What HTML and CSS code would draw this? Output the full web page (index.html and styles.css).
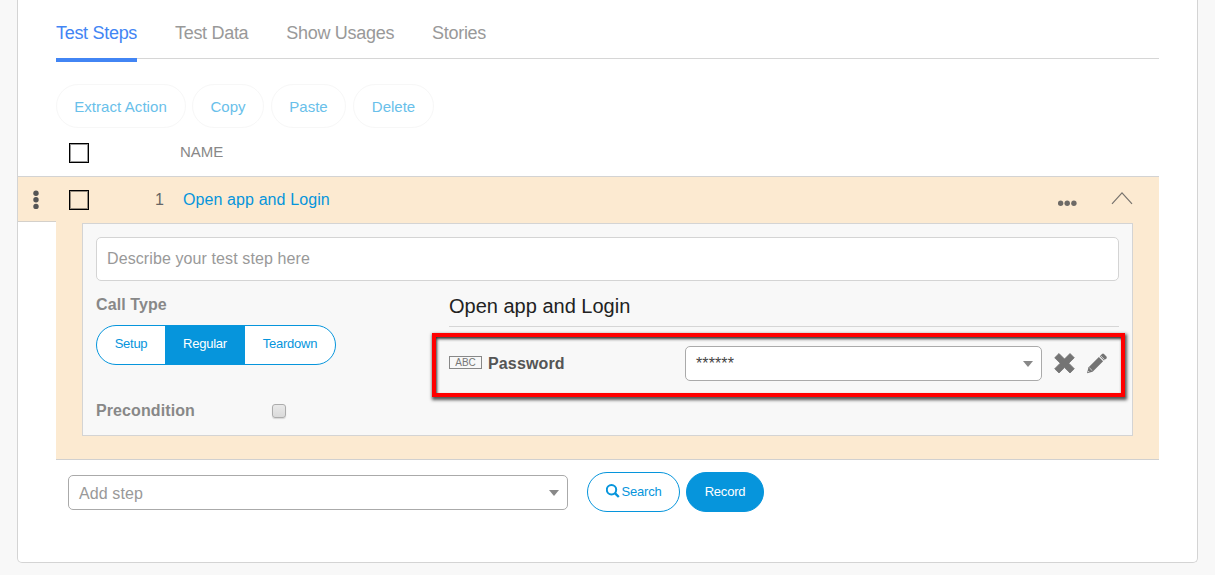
FILE: index.html
```html
<!DOCTYPE html>
<html lang="en">
<head>
<meta charset="utf-8">
<title>Test Steps</title>
<link rel="stylesheet" href="styles.css">
</head>
<body>
<main class="card">
  <nav class="tabs">
    <a class="tab tab-active">Test Steps</a>
    <a class="tab">Test Data</a>
    <a class="tab">Show Usages</a>
    <a class="tab">Stories</a>
  </nav>
  <div class="actions">
    <button class="action extract">Extract Action</button>
    <button class="action copy">Copy</button>
    <button class="action paste">Paste</button>
    <button class="action delete">Delete</button>
  </div>
  <div class="list-head">
    <span class="box"></span>
    <span class="col-name">NAME</span>
  </div>
  <section class="step">
    <div class="handle">
      <svg width="6" height="20" viewBox="0 0 6 20" fill="#555"><circle cx="3" cy="3.2" r="2.7"/><circle cx="3" cy="9.8" r="2.7"/><circle cx="3" cy="16.4" r="2.7"/></svg>
    </div>
    <div class="step-main">
      <header class="step-head">
        <span class="box"></span>
        <span class="num">1</span>
        <a class="step-link">Open app and Login</a>
        <svg class="more" width="20" height="6" viewBox="0 0 20 6" fill="#6d6a66"><circle cx="2.6" cy="3.2" r="2.7"/><circle cx="9.2" cy="3.2" r="2.7"/><circle cx="15.9" cy="3.2" r="2.7"/></svg>
        <svg class="collapse" width="22" height="14" viewBox="0 0 22 14" fill="none" stroke="#77736d" stroke-width="1.2"><path d="M1 12.8 11 1.8 21 12.8"/></svg>
      </header>
      <div class="panel">
        <div class="describe">Describe your test step here</div>
        <div class="columns">
          <div class="left">
            <div class="label">Call Type</div>
            <div class="segments">
              <span class="segment setup">Setup</span>
              <span class="segment regular">Regular</span>
              <span class="segment teardown">Teardown</span>
            </div>
            <div class="precondition"><span class="label">Precondition</span><span class="check"></span></div>
          </div>
          <div class="right">
            <h2 class="title">Open app and Login</h2>
            <div class="param">
              <span class="abc">ABC</span>
              <span class="param-name">Password</span>
              <div class="select value"><span class="stars">******</span><span class="caret"></span></div>
              <svg class="remove" width="22" height="22" viewBox="0 0 22 22" fill="#747474"><path d="M6 .5 11.5 6 17 .5 21.3 4.8 15.8 10.2 21.3 15.8 17 20 11.5 14.6 6 20 1.7 15.8 7.2 10.2 1.7 4.8Z" stroke="#747474" stroke-width=".8" stroke-linejoin="round"/></svg>
              <svg class="edit" width="22" height="22" viewBox="0 0 22 22" fill="#747474"><path d="M2.4 14.6 12.9 4.1 17.1 8.3 6.6 18.8 1 20.2Z"/><path d="M13.7 3.3 16 1Q17 .2 18 1L20.4 3.4Q21.2 4.4 20.4 5.4L17.9 7.5Z"/><path d="M14.6 2.7 18.6 6.7M3.4 14.8 6.3 17.7" stroke="#f8f8f8" stroke-width=".7" fill="none"/><path d="M2.2 18 3.2 19" stroke="#f8f8f8" stroke-width=".8"/></svg>
              <div class="highlight"></div>
            </div>
          </div>
        </div>
      </div>
    </div>
  </section>
  <footer class="add-row">
    <div class="select add"><span class="placeholder">Add step</span><span class="caret"></span></div>
    <button class="pill search"><svg width="14" height="14" viewBox="0 0 14 14" fill="none" stroke="#0695dc"><circle cx="5.5" cy="5.7" r="4.7" stroke-width="2"/><path d="M8.9 9.1 12.8 13" stroke-width="2.4"/></svg><span>Search</span></button>
    <button class="pill record">Record</button>
  </footer>
</main>
</body>
</html>
```
FILE: styles.css
```css
* { box-sizing: border-box; }
body {
  margin: 0;
  height: 575px;
  overflow: hidden;
  background: #f8f8f8;
  font: 16px/20px "Liberation Sans", Arial, sans-serif;
}
svg { display: block; flex: none; }
button { font-family: inherit; padding: 0; }
.card {
  width: 1181px;
  height: 563px;
  margin-left: 17px;
  background: #fff;
  border: 1px solid #d4d4d4;
  border-top: 0;
  border-radius: 0 0 5px 5px;
}
.tabs {
  display: flex;
  gap: 38px;
  height: 59px;
  margin: 0 38px;
  border-bottom: 1px solid #d6d6d6;
}
.tab {
  height: 62px;
  padding-top: 23px;
  color: #999;
  font-size: 18px;
  letter-spacing: -.3px;
  white-space: nowrap;
}
.tab-active { width: 81px; color: #4285f4; border-bottom: 4px solid #4285f4; }
.actions { display: flex; gap: 7px; margin: 25px 38px 0; }
.action {
  height: 44px;
  border: 1px solid #f7f7f7;
  border-radius: 22px;
  background: #fff;
  color: #69c0ea;
  font-size: 15px;
}
.extract { width: 130px; margin-right: -1px; padding-right: 1px; letter-spacing: .07px; }
.copy { width: 72px; }
.paste { width: 75px; }
.delete { width: 81px; }
.list-head {
  display: flex;
  height: 49px;
  width: 1141px;
  padding: 14px 0 0 51px;
  border-bottom: 1px solid #d3d3d3;
}
.box {
  flex: none;
  width: 20px;
  height: 20px;
  margin-top: 1px;
  border: 1px solid #000;
  box-shadow: inset 0 0 0 1px rgba(0, 0, 0, .4);
}
.col-name { margin-left: 91px; color: #888; font-size: 15px; }
.step { display: flex; width: 1141px; }
.handle {
  width: 38px;
  height: 45px;
  padding: 13px 0 0 15px;
  background: #fcead1;
  border-bottom: 1px solid #d4d0ca;
}
.step-main {
  width: 1103px;
  height: 283px;
  padding: 0 26px;
  background: #fcead1;
  border-bottom: 1px solid #d0d0d0;
}
.step-head { display: flex; height: 46px; margin: 0 -26px; padding: 12px 26px 0 13px; }
.num { width: 28px; margin-left: 66px; padding-top: 1px; color: #666; }
.step-link { width: 875px; padding-top: 1px; color: #0695dc; letter-spacing: .1px; }
.more { margin-top: 11px; }
.collapse { margin: 2px 0 0 33px; }
.panel {
  width: 1051px;
  height: 213px;
  padding: 13px;
  background: #f8f8f8;
  border: 1px solid #d4d4d4;
}
.describe {
  height: 44px;
  padding: 11px 10px;
  background: #fff;
  border: 1px solid #d4d4d4;
  border-radius: 5px;
  color: #999;
  letter-spacing: .1px;
}
.columns { display: flex; }
.left { width: 353px; padding-top: 14px; }
.label { display: block; color: #888; font-weight: bold; letter-spacing: .1px; }
.segments {
  display: flex;
  width: 240px;
  height: 40px;
  margin-top: 10px;
  overflow: hidden;
  border: 1px solid #0695dc;
  border-radius: 20px;
  background: #fff;
}
.segment {
  padding-top: 8px;
  color: #0695dc;
  font-size: 13px;
  letter-spacing: -.25px;
  text-align: center;
}
.setup { width: 68px; }
.regular { width: 80px; background: #0695dc; color: #fff; }
.teardown { width: 90px; }
.precondition { display: flex; margin-top: 36px; }
.check {
  width: 14px;
  height: 14px;
  margin: 3px 0 0 76px;
  border: 1px solid #acacac;
  border-radius: 3px;
  background: linear-gradient(#e9e9e9, #dadada);
  box-shadow: 0 1px 1px #d6d6d6;
}
.precondition .label { width: 100px; }
.right { width: 670px; }
.title {
  height: 46px;
  margin: 0;
  padding-top: 13px;
  border-bottom: 1px solid #d6d6d6;
  color: #222;
  font-size: 20px;
  font-weight: normal;
  line-height: 25px;
}
.param { position: relative; display: flex; height: 54px; padding-top: 19px; }
.highlight {
  position: absolute;
  left: -17px;
  top: 6px;
  width: 693px;
  height: 64px;
  border: 4px solid #f00;
  box-shadow: 1px 2px 3px 1px #555, inset 1px 2px 3px #333;
}
.abc {
  width: 33px;
  height: 13px;
  margin-top: 10px;
  border: 1px solid #888;
  color: #777;
  font-size: 10px;
  line-height: 12px;
  text-align: center;
}
.param-name { width: 197px; padding: 8px 0 0 6px; color: #555; font-weight: bold; letter-spacing: .15px; }
.select {
  display: flex;
  align-items: center;
  justify-content: space-between;
  height: 35px;
  padding: 0 8px 0 10px;
  background: #fff;
  border: 1px solid #aaa;
  border-radius: 5px;
  color: #999;
}
.value { width: 357px; margin-left: 6px; }
.stars { color: #444; letter-spacing: .1px; }
.placeholder { padding-top: 2px; letter-spacing: .1px; }
.caret { border: solid transparent; border-width: 6px 5px 0; border-top-color: #888; }
.remove { margin: 7px 0 0 11px; }
.edit { margin: 7px 0 0 11px; }
.add-row { display: flex; padding: 12px 0 0 50px; }
.add { width: 500px; margin-top: 3px; }
.pill {
  height: 40px;
  padding-bottom: 2px;
  border: 1px solid #0695dc;
  border-radius: 20px;
  font-size: 13px;
  letter-spacing: -.2px;
}
.search {
  display: flex;
  align-items: center;
  justify-content: center;
  gap: 2px;
  width: 93px;
  margin-left: 19px;
  background: #fff;
  color: #0695dc;
}
.record { width: 78px; margin-left: 6px; background: #0695dc; color: #fff; }
```
